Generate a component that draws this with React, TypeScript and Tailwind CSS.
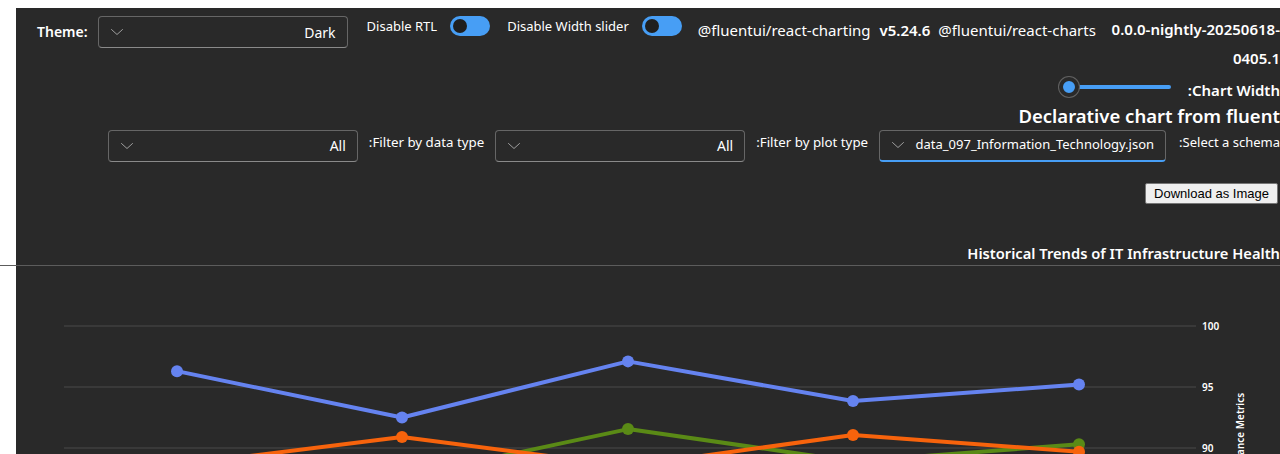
import React from 'react';

const blue = [96.3, 92.5, 97.1, 93.85, 95.2];
const green = [86.8, 87.6, 91.55, 88.9, 90.3];
const orange = [88.6, 90.9, 88.5, 91.07, 89.7];
const xs = [177, 402, 628, 853, 1079];

// y in page coords: 100 -> 326, 5 units -> 61px
const py = (v: number) => 326 + (100 - v) * 12.2;

function Chevron() {
  return (
    <svg width="14" height="14" viewBox="0 0 14 14" className="shrink-0">
      <path d="M1.5 4.5 L7 9.5 L12.5 4.5" fill="none" stroke="#9e9e9e" strokeWidth="1" strokeLinecap="round" />
    </svg>
  );
}

function Dropdown({ value, w, focused, small }: { value: string; w: string; focused?: boolean; small?: boolean }) {
  return (
    <div
      className={`${w} shrink-0 h-[32px] flex items-center justify-between pl-[11px] pr-[11px] rounded-[4px] border border-[#666666] ${focused ? 'border-b-2 border-b-[#479ef5]' : 'border-b-[#8a8a8a]'} bg-[#292929]`}
    >
      <Chevron />
      <span className={`${small ? 'text-[13px]' : 'text-[14px]'} text-white`}>{value}</span>
    </div>
  );
}

function Toggle() {
  return (
    <div className="w-[40px] h-[20px] shrink-0 rounded-full bg-[#479ef5] flex items-center px-[3px]">
      <div className="w-[14px] h-[14px] rounded-full bg-[#1f1f1f]" />
    </div>
  );
}

function Series({ vals, color }: { vals: number[]; color: string }) {
  const pts = vals.map((v, i) => `${xs[i]},${py(v)}`).join(' ');
  return (
    <g>
      <polyline points={pts} fill="none" stroke={color} strokeWidth="4" strokeLinejoin="round" />
      {vals.map((v, i) => (
        <circle key={i} cx={xs[i]} cy={py(v)} r="6" fill={color} />
      ))}
    </g>
  );
}

export default function App() {
  return (
    <div className="w-[1280px] h-[454px] overflow-hidden bg-white pl-4 pt-2 font-['Noto_Sans',sans-serif] text-white">
      <div className="bg-[#292929] h-[446px] relative">
        {/* top row */}
        <div className="flex items-start pt-2 pl-[21px] whitespace-nowrap">
          <span className="shrink-0 text-[14px] font-semibold mt-[5px] mr-[10px]">Theme:</span>
          <Dropdown value="Dark" w="w-[250px]" />
          <span className="shrink-0 text-[13px] ml-[19px] mt-[1px]">Disable RTL</span>
          <div className="ml-[13px]"><Toggle /></div>
          <span className="shrink-0 text-[13px] ml-[17px] mt-[1px]">Disable Width slider</span>
          <div className="ml-[13px]"><Toggle /></div>
          <span className="shrink-0 text-[15px] ml-[16px] mt-[3px]">@fluentui/react-charting</span>
          <span className="shrink-0 text-[15px] font-semibold ml-[9px] mt-[3px]">v5.24.6</span>
          <span className="shrink-0 text-[15px] ml-[8px] mt-[3px]">@fluentui/react-charts</span>
          <span className="min-w-0 text-[15px] font-semibold ml-[9px] w-[184px] whitespace-normal text-right leading-[29px] -mt-[1px]">
            0.0.0-nightly-20250618-0405.1
          </span>
        </div>

        {/* chart width slider */}
        <div className="flex items-center justify-end whitespace-nowrap">
          <div className="relative w-[112px] h-[20px] flex items-center">
            <div className="absolute left-[10px] right-0 h-[4px] rounded-full bg-[#479ef5]" />
            <div className="absolute left-0 w-[20px] h-[20px] rounded-full bg-[#479ef5] border-[4px] border-[#292929] ring-1 ring-[#616161]" />
          </div>
          <span className="text-[15px] font-semibold ml-[17px] mt-[6px]">:Chart Width</span>
        </div>

        {/* title */}
        <div className="flex justify-end whitespace-nowrap">
          <span className="text-[18.5px] font-semibold leading-[28px]">Declarative chart from fluent</span>
        </div>

        {/* filters */}
        <div className="flex items-start justify-end whitespace-nowrap">
          <Dropdown value="All" w="w-[250px]" />
          <span className="text-[13.3px] ml-[11px] mt-[3px] mr-[11px]">:Filter by data type</span>
          <Dropdown value="All" w="w-[250px]" />
          <span className="text-[13.3px] ml-[11px] mt-[3px] mr-[11px]">:Filter by plot type</span>
          <Dropdown value="data_097_Information_Technology.json" w="w-[287px]" focused small />
          <span className="text-[13px] ml-[13px] mt-[3px]">:Select a schema</span>
        </div>

        {/* download */}
        <div className="flex justify-end mt-[21px] pr-[2px]">
          <button className="h-[21px] px-[8px] bg-[#efefef] text-black border border-[#767676] rounded-[2px] text-[13px] leading-none font-['Liberation_Sans',sans-serif]">
            Download as Image
          </button>
        </div>

        {/* chart title */}
        <div className="flex justify-end mt-[39px] whitespace-nowrap">
          <span className="text-[14.7px] font-semibold leading-[20px]">Historical Trends of IT Infrastructure Health</span>
        </div>
        <div className="-ml-4 mt-[2px] h-px bg-[#5c5c5c]" />

        {/* chart */}
        <svg width="1264" height="188" className="block" viewBox="16 266 1264 188">
          {[326, 387, 448].map((y) => (
            <line key={y} x1="64" x2="1196" y1={y} y2={y} stroke="#4a4a4a" strokeWidth="1" />
          ))}
          {[['100', 326], ['95', 387], ['90', 448]].map(([t, y]) => (
            <text key={t} x="1202" y={Number(y) + 4} fontSize="10" fontWeight="600" fill="#ffffff" fontFamily="Noto Sans, sans-serif">
              {t}
            </text>
          ))}
          <text
            x="0"
            y="0"
            transform="translate(1244 444) rotate(-90)"
            textAnchor="middle"
            fontSize="10"
            fontWeight="600"
            fill="#ffffff"
            fontFamily="Noto Sans, sans-serif"
          >
            Performance Metrics
          </text>
          <Series vals={green} color="#5a8a16" />
          <Series vals={orange} color="#f7630c" />
          <Series vals={blue} color="#6583f0" />
        </svg>
      </div>
    </div>
  );
}
